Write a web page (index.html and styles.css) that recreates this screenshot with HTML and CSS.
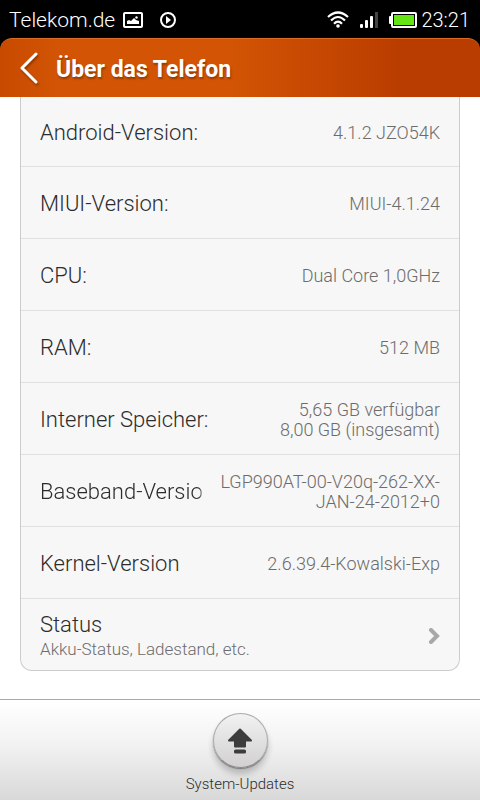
FILE: index.html
```html
<!DOCTYPE html>
<html lang="de">
<head>
    <meta charset="UTF-8">
    <meta name="viewport" content="width=device-width, initial-scale=1.0">
    <title>Über das Telefon</title>
    <link rel="stylesheet" href="styles.css">
</head>
<body>
    <div class="status-bar">
        <span class="carrier">Telekom.de</span>
        <svg class="icon-picture" width="20" height="16" viewBox="0 0 20 16" aria-hidden="true">
            <rect x="1" y="1" width="18" height="14" rx="1" fill="none" stroke="#fff" stroke-width="2"/>
            <path d="M4 12V9l2-1 2 1 3-3 2 2 3 1v3z" fill="#fff"/>
            <circle cx="13.500" cy="5.500" r="1.200" fill="#fff"/>
        </svg>
        <svg class="icon-play" width="16" height="16" viewBox="0 0 16 16" aria-hidden="true">
            <circle cx="8" cy="8" r="7" fill="none" stroke="#fff" stroke-width="2"/>
            <path d="M6 4l5 4-5 4z" fill="#fff"/>
        </svg>
        <div class="indicators">
            <svg width="22" height="17" viewBox="0 0 22 17" aria-hidden="true">
                <g fill="none" stroke="#fff" stroke-width="2.200">
                    <path d="M1 6Q11-3 21 6"/>
                    <path d="M4 9.500Q11 2.500 18 9.500"/>
                    <path d="M7 12.700Q11 8.500 15 12.700"/>
                </g>
                <circle cx="11" cy="15" r="1.800" fill="#fff"/>
            </svg>
            <svg width="18" height="16" viewBox="0 0 18 16" aria-hidden="true">
                <rect x="0" y="12" width="3" height="4" rx="1" fill="#fff"/>
                <rect x="5" y="8" width="3" height="8" rx="1" fill="#fff"/>
                <rect x="10" y="4" width="3" height="12" rx="1" fill="#fff"/>
                <rect x="15" y="0" width="3" height="16" fill="#444"/>
            </svg>
            <svg width="28" height="16" viewBox="0 0 28 16" aria-hidden="true">
                <rect x="0" y="4" width="3" height="8" rx="1" fill="#fff"/>
                <rect x="3" y="1" width="24" height="14" rx="1" fill="#000" stroke="#fff" stroke-width="2"/>
                <rect x="5" y="3" width="20" height="10" fill="#66e515"/>
            </svg>
            <span class="clock">23:21</span>
        </div>
    </div>

    <header class="title-bar">
        <button type="button" class="back" aria-label="Zurück">
            <svg width="18" height="32" viewBox="0 0 18 32" aria-hidden="true">
                <path d="M16 2L2 16l14 14" fill="none" stroke="#fff" stroke-width="3" stroke-linecap="round" stroke-linejoin="round"/>
            </svg>
        </button>
        <h1>Über das Telefon</h1>
    </header>

    <main class="content">
        <ul class="card">
            <li class="row"><span class="label">Android-Version:</span><span class="value">4.1.2 JZO54K</span></li>
            <li class="row"><span class="label">MIUI-Version:</span><span class="value">MIUI-4.1.24</span></li>
            <li class="row"><span class="label">CPU:</span><span class="value">Dual Core 1,0GHz</span></li>
            <li class="row"><span class="label">RAM:</span><span class="value">512 MB</span></li>
            <li class="row"><span class="label">Interner Speicher:</span><span class="value">5,65 GB verfügbar<br>8,00 GB (insgesamt)</span></li>
            <li class="row"><span class="label label-fade">Baseband-Version</span><span class="value">LGP990AT-00-V20q-262-XX-<br>JAN-24-2012+0</span></li>
            <li class="row"><span class="label">Kernel-Version</span><span class="value">2.6.39.4-Kowalski-Exp</span></li>
            <li>
                <a class="row" href="#status">
                    <span class="stack">
                        <span class="label">Status</span>
                        <span class="summary">Akku-Status, Ladestand, etc.</span>
                    </span>
                    <svg width="12" height="16" viewBox="0 0 12 16" aria-hidden="true">
                        <path d="M3 2l6 6-6 6" fill="none" stroke="#a8a8a8" stroke-width="4" stroke-linecap="round"/>
                    </svg>
                </a>
            </li>
        </ul>
    </main>

    <footer class="toolbar">
        <button type="button" class="update">
            <span class="update-disc">
                <svg width="26" height="26" viewBox="0 0 26 26" aria-hidden="true">
                    <path d="M13 1.500L24 12.500H18V18.500H8V12.500H2z" fill="#3c3c3c" stroke="#3c3c3c" stroke-width="2" stroke-linejoin="round"/>
                    <rect x="7" y="21.500" width="12" height="4" rx="1.500" fill="#3c3c3c"/>
                </svg>
            </span>
            System-Updates
        </button>
    </footer>
</body>
</html>
```

FILE: styles.css
```css
* {
    box-sizing: border-box;
}

body {
    margin: 0;
    min-height: 100vh;
    display: flex;
    flex-direction: column;
    background: linear-gradient(#000 60px, #fff 60px);
    font-family: Roboto, sans-serif;
    font-weight: 300;
    color: #2c2c2c;
}

button {
    padding: 0;
    border: 0;
    background: none;
    font: inherit;
    color: inherit;
    cursor: pointer;
}

svg {
    display: block;
    flex: none;
}

.status-bar {
    height: 38px;
    padding: 1px 10px 0 9px;
    display: flex;
    align-items: center;
    background: #000;
    color: #fff;
}

.carrier {
    font-size: 21px;
}

.icon-picture {
    margin-left: 8px;
}

.icon-play {
    margin-left: 17px;
}

.indicators {
    margin-left: auto;
    display: flex;
    align-items: center;
    gap: 11px;
}

.clock {
    margin-left: -7px;
    font-size: 20px;
}

.title-bar {
    height: 59px;
    padding: 0 20px;
    display: flex;
    align-items: center;
    gap: 18px;
    border-top: 1px solid #dc6a22;
    border-radius: 12px 12px 0 0;
    background: linear-gradient(90deg, #c84a00, #d25404 12%, #d25404 48%, #b93c00 85%);
}

.title-bar svg {
    filter: drop-shadow(1px 2px 1px rgba(0, 0, 0, 0.3));
}

.title-bar h1 {
    margin: 0;
    padding-top: 2px;
    font-size: 23px;
    font-weight: 700;
    color: #fff;
    text-shadow: 1px 2px 2px rgba(0, 0, 0, 0.3);
}

.content {
    flex: 1;
    padding: 0 20px 28px;
    background: #fff;
}

.card {
    margin: 0;
    padding: 0;
    list-style: none;
    background: #f7f7f7;
    border: 1px solid #ccc;
    border-top: 0;
    border-radius: 0 0 12px 12px;
}

.card li + li {
    border-top: 1px solid #e0e0e0;
}

.row {
    min-height: 72px;
    padding: 2px 19px 0;
    display: flex;
    align-items: center;
    justify-content: space-between;
    gap: 14px;
    color: inherit;
    text-decoration: none;
}

/* the list is scrolled a little under the title bar */
.card .row:first-child {
    min-height: 69px;
}

.card a.row:first-child {
    min-height: 71px;
}

.label {
    font-size: 22px;
    line-height: 25px;
    white-space: nowrap;
}

.label-fade {
    flex: 0 1 164px;
    overflow: hidden;
    -webkit-mask-image: linear-gradient(90deg, #000 97%, transparent);
    mask-image: linear-gradient(90deg, #000 97%, transparent);
}

.value {
    flex: none;
    font-size: 18px;
    line-height: 20px;
    text-align: right;
    color: #6c6c6c;
}

.stack {
    display: flex;
    flex-direction: column;
    gap: 2px;
}

.summary {
    font-size: 17px;
    line-height: 20px;
    color: #6c6c6c;
}

.toolbar {
    min-height: 101px;
    display: flex;
    justify-content: center;
    align-items: flex-end;
    border-top: 1px solid #aaa;
    background: linear-gradient(#fff, #f4f4f4 40%, #d8d8d8);
}

.update {
    padding-bottom: 6px;
    display: flex;
    flex-direction: column;
    align-items: center;
    gap: 6px;
    font-size: 15px;
    line-height: 20px;
}

.update-disc {
    width: 55px;
    height: 55px;
    display: flex;
    align-items: center;
    justify-content: center;
    border: 1px solid #aaa;
    border-bottom-color: #888;
    border-radius: 50%;
    background: linear-gradient(#f2f2f2, #d2d0d0);
    box-shadow: 0 1px 1px #777, 0 6px 6px rgba(0, 0, 0, 0.2);
}
```
